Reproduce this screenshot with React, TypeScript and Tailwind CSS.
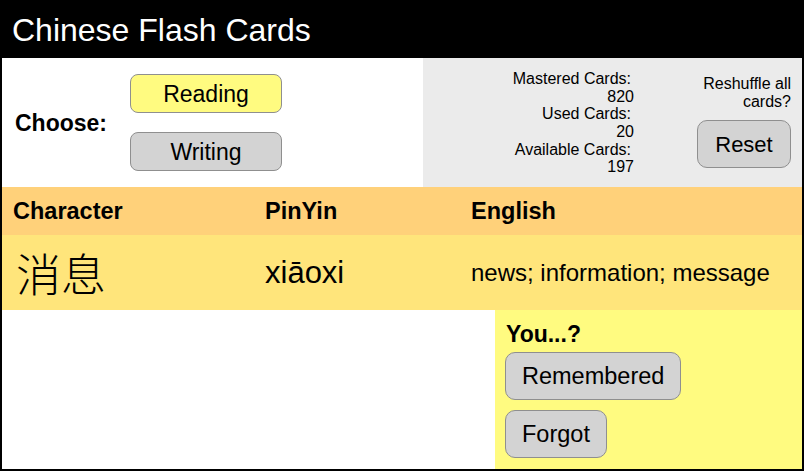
import React from "react";

export default function App() {
  return (
    <div
      className="w-[804px] h-[471px] flex flex-col border-x-2 border-b-2 border-black bg-white text-black overflow-hidden"
      style={{ fontFamily: '"Liberation Sans", Arial, "Noto Sans CJK SC", sans-serif' }}
    >
      {/* Title bar */}
      <div className="h-[58px] shrink-0 bg-black text-white text-[32px] pl-[10px] pt-[2px] flex items-center leading-none">
        Chinese Flash Cards
      </div>

      {/* Controls */}
      <div className="h-[129px] shrink-0 flex">
        <div className="w-[421px] bg-white flex items-center pl-[13px]">
          <div className="w-[115px] text-[23px] leading-[26px] font-bold">Choose:</div>
          <div className="flex flex-col gap-[19px]">
            <button className="w-[152px] h-[39px] pt-[1px] rounded-[8px] border border-[#8f8f8f] bg-[#fffb80] text-[23px] leading-none">
              Reading
            </button>
            <button className="w-[152px] h-[39px] pt-[1px] rounded-[8px] border border-[#8f8f8f] bg-[#d3d3d3] text-[23px] leading-none">
              Writing
            </button>
          </div>
        </div>
        <div className="flex-1 bg-[#ebebeb] flex items-center justify-end pr-[11px] gap-[63px]">
          <div className="flex flex-col text-right text-[16px] leading-[17.7px] mt-[1px]">
            <span className="pr-[3px]">Mastered Cards:</span>
            <span>820</span>
            <span className="pr-[3px]">Used Cards:</span>
            <span>20</span>
            <span className="pr-[3px]">Available Cards:</span>
            <span>197</span>
          </div>
          <div className="w-[94px] flex flex-col items-end gap-[9px] -mt-[2px]">
            <div className="text-right text-[16px] leading-[18px]">Reshuffle all cards?</div>
            <button className="w-[94px] h-[48px] pt-[2px] rounded-[10px] border border-[#8f8f8f] bg-[#d3d3d3] text-[22px] leading-none">
              Reset
            </button>
          </div>
        </div>
      </div>

      {/* Table header */}
      <div className="h-[48px] shrink-0 bg-[#ffd17a] flex items-center text-[23.5px] leading-[26px] font-bold">
        <div className="w-[263px] pl-[11px]">Character</div>
        <div className="w-[206px]">PinYin</div>
        <div className="flex-1">English</div>
      </div>

      {/* Data row */}
      <div className="h-[75px] shrink-0 bg-[#ffe57b] flex items-center">
        <div
          className="w-[263px] pl-[14px] text-[45px] leading-none"
          style={{ fontFamily: '"Noto Sans CJK SC", sans-serif', fontWeight: 300 }}
        >
          消息
        </div>
        <div className="w-[206px] text-[31px] leading-none">xiāoxi</div>
        <div className="flex-1 text-[24px] leading-none">news; information; message</div>
      </div>

      {/* Bottom */}
      <div className="flex-1 flex">
        <div className="w-[493px] bg-white" />
        <div className="flex-1 bg-[#fffb80] pl-[10px] pt-[11px] flex flex-col items-start">
          <div className="text-[23px] leading-[26px] font-bold pl-[1px]">You...?</div>
          <button className="mt-[5px] h-[48px] pt-[2px] px-[16px] rounded-[10px] border border-[#8f8f8f] bg-[#d3d3d3] text-[23.5px] leading-none">
            Remembered
          </button>
          <button className="mt-[10px] h-[48px] pt-[2px] px-[16px] rounded-[10px] border border-[#8f8f8f] bg-[#d3d3d3] text-[23.5px] leading-none">
            Forgot
          </button>
        </div>
      </div>
    </div>
  );
}
